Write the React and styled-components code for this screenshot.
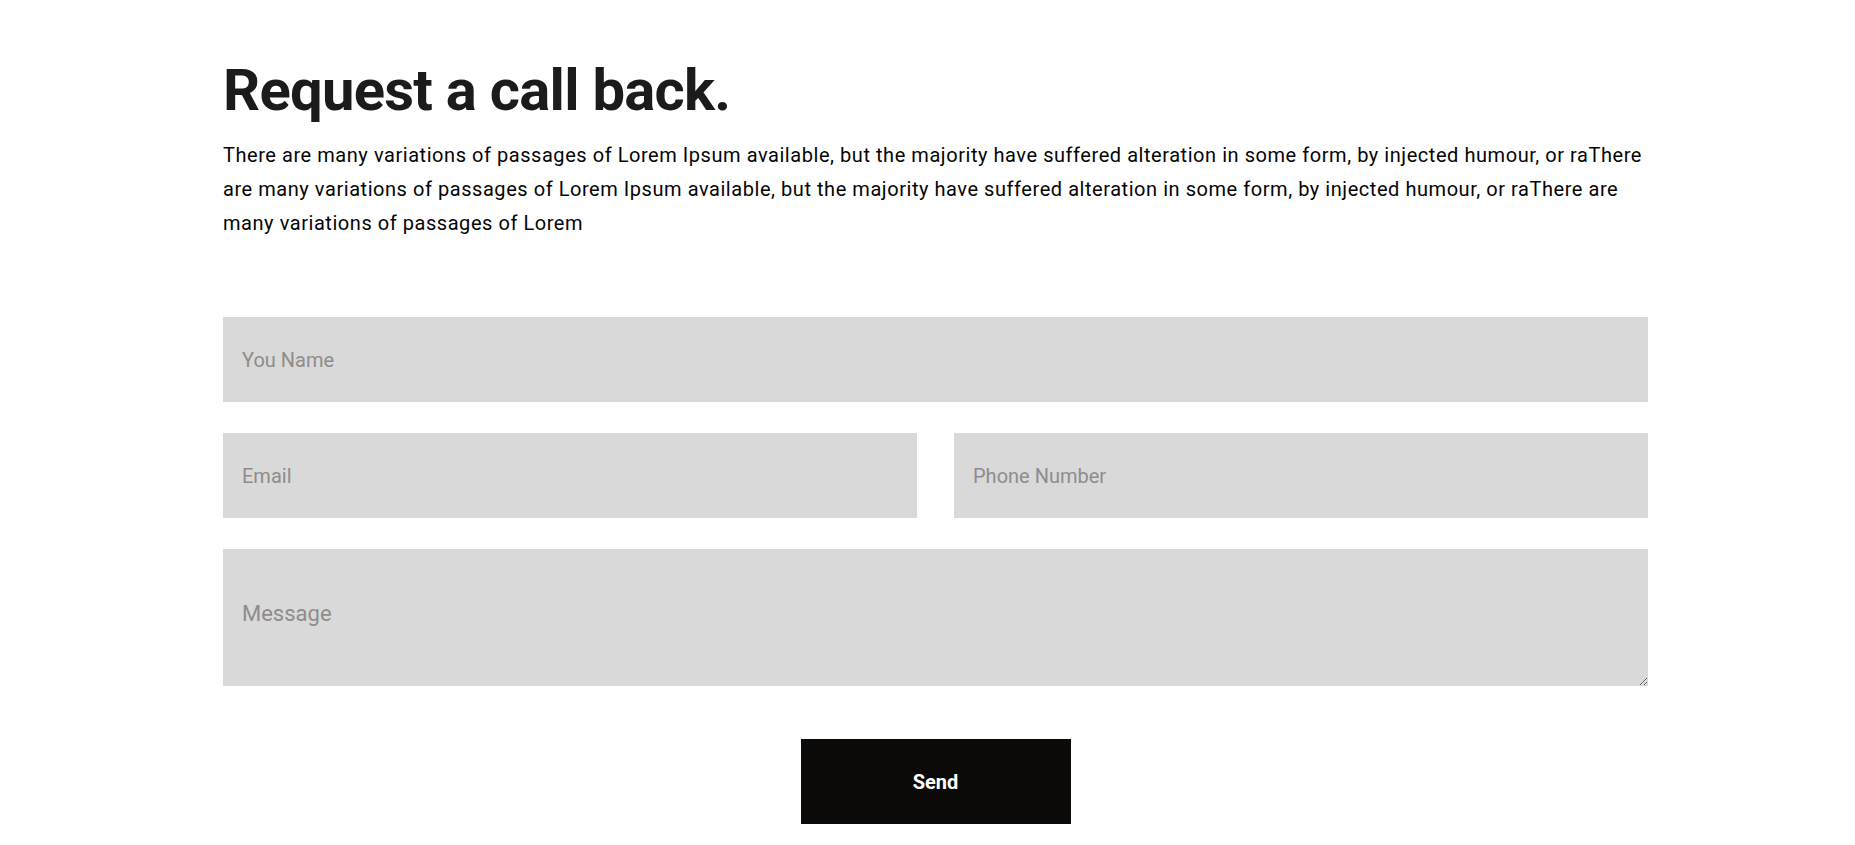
import styled, { createGlobalStyle } from "styled-components";

const GlobalStyle = createGlobalStyle`
  * {
    box-sizing: border-box;
  }
  body {
    margin: 0;
    background: #ffffff;
    font-family: Roboto, "Liberation Sans", Arial, sans-serif;
  }
`;

// page + section
const Page = styled.div`
  padding: 56px 0 40px 223px;
`;
const Section = styled.section`
  width: 1425px;
`;
const Title = styled.h1`
  margin: 0;
  font-size: 58px;
  line-height: 68px;
  font-weight: 700;
  letter-spacing: -0.75px;
  color: #1b1b1b;
`;
const Intro = styled.p`
  margin: 14px 0 0;
  font-size: 20px;
  line-height: 34px;
  letter-spacing: 0.55px;
  color: #050505;
`;

// form parts
const Form = styled.form`
  margin-top: 77px;
  display: flex;
  flex-direction: column;
  gap: 31px;
`;
const Row = styled.div`
  display: grid;
  grid-template-columns: 1fr 1fr;
  gap: 37px;
`;
const Field = styled.input`
  width: 100%;
  height: 85px;
  border: none;
  outline: none;
  background: #d9d9d9;
  padding: 0 19px;
  font-family: inherit;
  font-size: 20px;
  color: #222;
  &::placeholder {
    color: #8f8c8b;
  }
`;
const Message = styled.textarea`
  display: block;
  width: 100%;
  height: 137px;
  border: none;
  outline: none;
  background: #d9d9d9;
  padding: 52px 19px 0;
  font-family: inherit;
  font-size: 22px;
  color: #222;
  resize: vertical;
  &::placeholder {
    color: #8f8c8b;
  }
`;
const Actions = styled.div`
  display: flex;
  justify-content: center;
  margin-top: 22px;
`;
const SendButton = styled.button`
  width: 270px;
  height: 85px;
  border: none;
  background: #0b0a09;
  color: #ffffff;
  font-family: inherit;
  font-size: 20px;
  font-weight: 700;
  cursor: pointer;
`;

export default function App() {
  return (
    <>
      <GlobalStyle />
      <Page>
        <Section>
          <Title>Request a call back.</Title>
          <Intro>
            There are many variations of passages of Lorem Ipsum available, but
            the majority have suffered alteration in some form, by injected
            humour, or raThere are many variations of passages of Lorem Ipsum
            available, but the majority have suffered alteration in some form,
            by injected humour, or raThere are many variations of passages of
            Lorem
          </Intro>
          <Form onSubmit={(e) => e.preventDefault()}>
            <Field type="text" placeholder="You Name" />
            <Row>
              <Field type="email" placeholder="Email" />
              <Field type="tel" placeholder="Phone Number" />
            </Row>
            <Message placeholder="Message" />
            <Actions>
              <SendButton type="submit">Send</SendButton>
            </Actions>
          </Form>
        </Section>
      </Page>
    </>
  );
}
